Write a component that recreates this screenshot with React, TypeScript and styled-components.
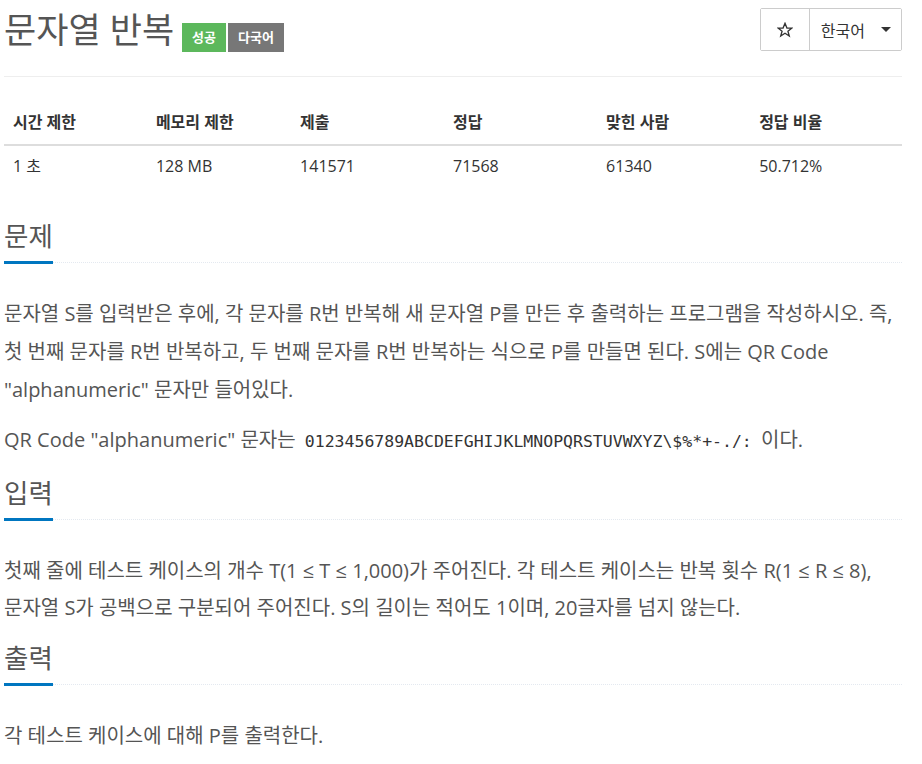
import React from "react";
import styled, { createGlobalStyle } from "styled-components";

const GlobalStyle = createGlobalStyle`
  html, body {
    margin: 0;
    padding: 0;
    background: #fff;
  }
  body {
    font-family: "Open Sans", "Noto Sans CJK KR", sans-serif;
    color: #333;
  }
`;

const Page = styled.div`
  width: 898px;
  padding: 8px 20px 0 4px;
`;

const Header = styled.div`
  display: flex;
  justify-content: space-between;
  align-items: flex-start;
  border-bottom: 1px solid #eee;
  height: 68px;
`;

const Title = styled.h1`
  display: flex;
  align-items: flex-start;
  gap: 2px;
  margin: 0;
  font-weight: 400;
`;

const TitleText = styled.span`
  font-size: 35px;
  line-height: 44px;
  color: #555;
  margin-right: 6px;
`;

const Label = styled.span<{ $bg: string }>`
  display: inline-block;
  background: ${(p) => p.$bg};
  color: #fff;
  font-size: 13px;
  font-weight: 700;
  line-height: 29px;
  padding: 0 10px;
  margin-top: 15px;
`;

const ButtonGroup = styled.div`
  display: flex;
  border: 1px solid #ccc;
  border-radius: 2px;
  height: 41px;
`;

const GroupButton = styled.button`
  display: flex;
  align-items: center;
  justify-content: center;
  gap: 16px;
  background: #fff;
  border: none;
  padding: 0 10px 0 11px;
  font-family: "Open Sans", "Noto Sans CJK KR", sans-serif;
  font-size: 16px;
  color: #333;
  & + & {
    border-left: 1px solid #ccc;
  }
`;

const StarButton = styled(GroupButton)`
  width: 48px;
  padding: 0;
`;

const Caret = styled.span`
  width: 0;
  height: 0;
  border-left: 5px solid transparent;
  border-right: 5px solid transparent;
  border-top: 5px solid #333;
`;

const Table = styled.table`
  width: 100%;
  border-collapse: collapse;
  margin: 26px 0 31px;
  font-size: 16px;
`;

const Th = styled.th<{ $w: number }>`
  width: ${(p) => p.$w}px;
  text-align: left;
  font-weight: 700;
  padding: 9px 9px 12px;
  border-bottom: 2px solid #ddd;
  line-height: 20px;
`;

const Td = styled.td`
  padding: 10px 9px 9px;
  line-height: 20px;
`;

const Section = styled.section`
  & + & {
    margin-top: 4px;
  }
`;

const Headline = styled.h2`
  margin: 0 0 32px;
  border-bottom: 1px dotted #e4e9f0;
  font-size: 26.5px;
  font-weight: 400;
  color: #555;
  line-height: 40px;
  display: flex;
`;

const HeadlineText = styled.span`
  display: inline-block;
  border-bottom: 3px solid #0076c0;
  margin-bottom: -2px;
  padding-bottom: 5px;
`;

const Para = styled.p<{ $lh?: number; $mt?: number }>`
  margin: ${(p) => p.$mt ?? 0}px 0 12px;
  font-size: 20px;
  line-height: ${(p) => p.$lh ?? 38}px;
  color: #555;
  word-break: keep-all;
`;

const Code = styled.code`
  font-family: "DejaVu Sans Mono", monospace;
  font-size: 16.5px;
  color: #333;
  padding: 0 4px;
`;

const StarIcon = () => (
  <svg width="16" height="16" viewBox="0 0 24 24" fill="none" stroke="#333" strokeWidth="2" strokeLinejoin="miter">
    <polygon points="12,2 14.9,9 22,9.3 16.4,13.8 18.4,21 12,16.9 5.6,21 7.6,13.8 2,9.3 9.1,9" />
  </svg>
);

const stats = [
  { head: "시간 제한", value: "1 초", w: 147 },
  { head: "메모리 제한", value: "128 MB", w: 146 },
  { head: "제출", value: "141571", w: 151 },
  { head: "정답", value: "71568", w: 153 },
  { head: "맞힌 사람", value: "61340", w: 153 },
  { head: "정답 비율", value: "50.712%", w: 148 },
];

export default function App() {
  return (
    <>
      <GlobalStyle />
      <Page>
        <Header>
          <Title>
            <TitleText>문자열 반복</TitleText>
            <Label $bg="#5cb85c">성공</Label>
            <Label $bg="#777">다국어</Label>
          </Title>
          <ButtonGroup>
            <StarButton>
              <StarIcon />
            </StarButton>
            <GroupButton>
              한국어
              <Caret />
            </GroupButton>
          </ButtonGroup>
        </Header>

        <Table>
          <thead>
            <tr>
              {stats.map((s) => (
                <Th key={s.head} $w={s.w}>
                  {s.head}
                </Th>
              ))}
            </tr>
          </thead>
          <tbody>
            <tr>
              {stats.map((s) => (
                <Td key={s.head}>{s.value}</Td>
              ))}
            </tr>
          </tbody>
        </Table>

        <Section>
          <Headline>
            <HeadlineText>문제</HeadlineText>
          </Headline>
          <Para>
            문자열 S를 입력받은 후에, 각 문자를 R번 반복해 새 문자열 P를 만든 후 출력하는 프로그램을 작성하시오. 즉, 첫
            번째 문자를 R번 반복하고, 두 번째 문자를 R번 반복하는 식으로 P를 만들면 된다. S에는 QR Code
            "alphanumeric" 문자만 들어있다.
          </Para>
          <Para>
            QR Code "alphanumeric" 문자는 <Code>0123456789ABCDEFGHIJKLMNOPQRSTUVWXYZ\$%*+-./:</Code> 이다.
          </Para>
        </Section>

        <Section>
          <Headline>
            <HeadlineText>입력</HeadlineText>
          </Headline>
          <Para $lh={37} $mt={9}>
            첫째 줄에 테스트 케이스의 개수 T(1 ≤ T ≤ 1,000)가 주어진다. 각 테스트 케이스는 반복 횟수 R(1 ≤ R ≤ 8),
            문자열 S가 공백으로 구분되어 주어진다. S의 길이는 적어도 1이며, 20글자를 넘지 않는다.
          </Para>
        </Section>

        <Section>
          <Headline>
            <HeadlineText>출력</HeadlineText>
          </Headline>
          <Para>각 테스트 케이스에 대해 P를 출력한다.</Para>
        </Section>
      </Page>
    </>
  );
}
